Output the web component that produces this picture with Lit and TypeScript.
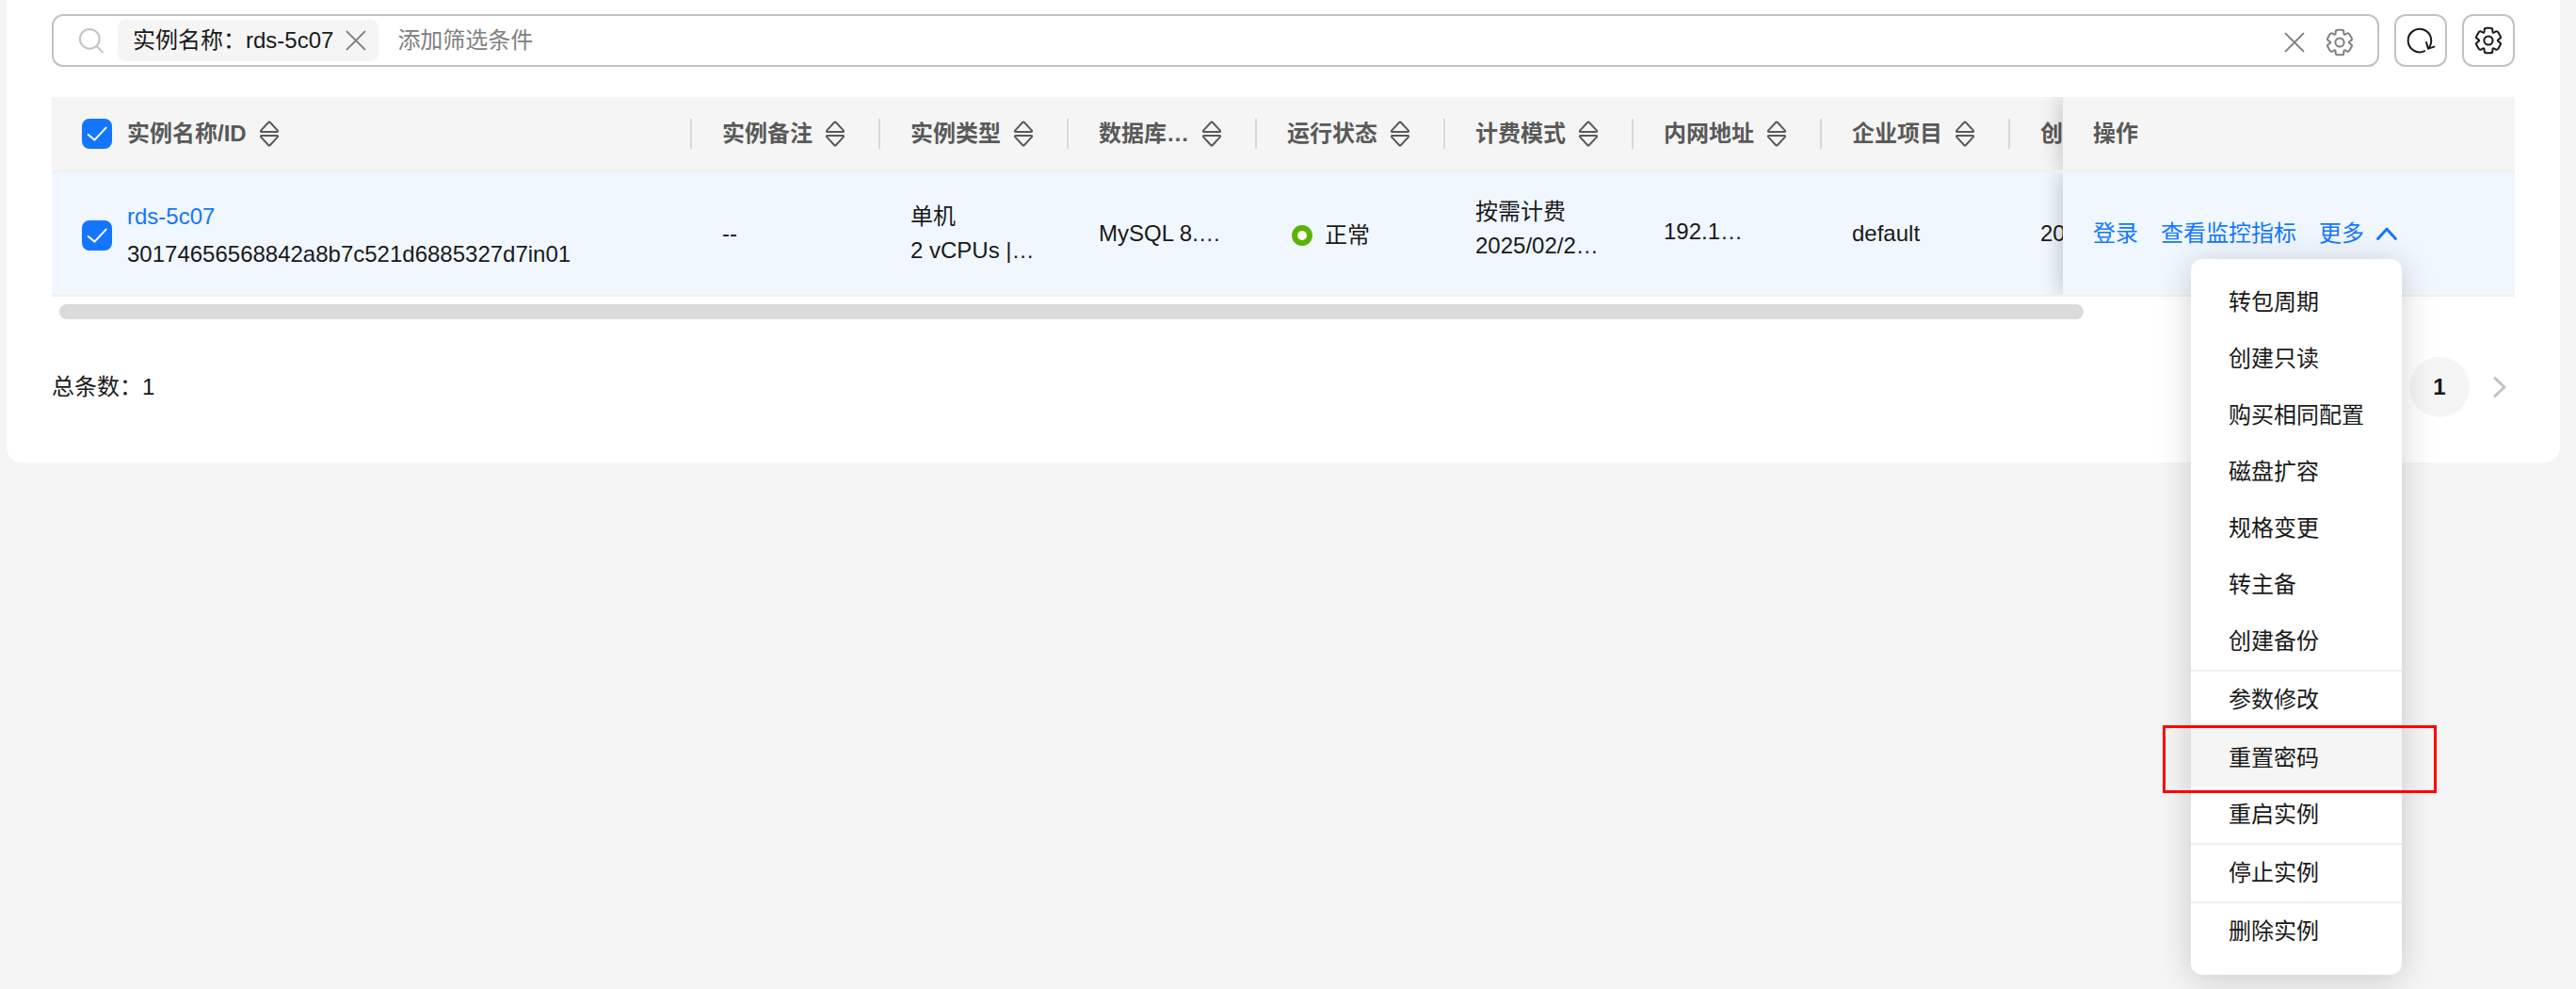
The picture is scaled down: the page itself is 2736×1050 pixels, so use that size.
import { LitElement, html, css, svg, nothing } from "lit";
import { customElement, property, state } from "lit/decorators.js";
import { classMap } from "lit/directives/class-map.js";

/** Outline of a six-lobed gear, drawn as a star polygon with rounded vertices. */
function gearOutline(cx: number, cy: number, outer: number, inner: number): string {
  const at = (deg: number, r: number) => {
    const a = ((deg - 90) * Math.PI) / 180;
    return [cx + r * Math.cos(a), cy + r * Math.sin(a)];
  };
  const pts: number[][] = [];
  for (let k = 0; k < 6; k++) {
    pts.push(at(k * 60 - 18, outer), at(k * 60 + 18, outer), at(k * 60 + 30, inner));
  }
  const n = pts.length;
  const toward = (a: number[], b: number[], d: number) => {
    const len = Math.hypot(b[0] - a[0], b[1] - a[1]);
    const t = Math.min(d / len, 0.5);
    return `${(a[0] + (b[0] - a[0]) * t).toFixed(2)} ${(a[1] + (b[1] - a[1]) * t).toFixed(2)}`;
  };
  let d = "";
  for (let i = 0; i < n; i++) {
    const p = pts[i];
    const prev = pts[(i + n - 1) % n];
    const next = pts[(i + 1) % n];
    d += `${i ? "L" : "M"}${toward(p, prev, 2.2)}Q${p[0].toFixed(2)} ${p[1].toFixed(2)} ${toward(p, next, 2.2)}`;
  }
  return d + "Z";
}

const SHAPES: Record<string, { w: number; h: number; body: unknown }> = {
  search: {
    w: 28,
    h: 28,
    body: svg`<circle cx="12.3" cy="12.3" r="10.4" /><path d="M19.6 20 26 26.4" />`,
  },
  close: { w: 24, h: 24, body: svg`<path d="M2.6 2.6 21.4 21.4M21.4 2.6 2.6 21.4" />` },
  gear: {
    w: 32,
    h: 32,
    body: svg`<path d=${gearOutline(16, 16, 14, 8.8)} /><circle cx="16" cy="16" r="4.6" />`,
  },
  refresh: {
    w: 32,
    h: 32,
    body: svg`<path d="M20.2 27.2A12.3 12.3 0 1 1 24 24.4" /><path d="M22 18 24 24.6 30.4 22.6" />`,
  },
  sort: {
    w: 24,
    h: 28,
    body: svg`<path d="M11.3 1.8q.7-.7 1.4 0l8 8.6q1.2 1.6-.7 1.7H4q-1.9-.1-.7-1.7Z" />
      <path d="M11.3 26.2q.7.7 1.4 0l8-8.6q1.2-1.6-.7-1.7H4q-1.9.1-.7 1.7Z" />`,
  },
  up: { w: 32, h: 24, body: svg`<path d="M6.6 17.4 16 7.2 25.4 17.4" />` },
  right: { w: 24, h: 24, body: svg`<path d="M7 2.6 17 12 7 21.4" />` },
};

@customElement("ui-icon")
export class UiIcon extends LitElement {
  static styles = css`
    :host {
      display: inline-flex;
      flex: none;
    }
    .shape {
      display: block;
      fill: none;
      stroke: currentColor;
      stroke-width: 2;
      stroke-linecap: round;
      stroke-linejoin: round;
    }
    .bold {
      stroke-width: 3;
    }
  `;
  @property() name = "close";
  @property({ type: Boolean }) bold = false;

  render() {
    const s = SHAPES[this.name];
    return html`<svg
      class=${classMap({ shape: true, bold: this.bold })}
      width=${s.w}
      height=${s.h}
      viewBox="0 0 ${s.w} ${s.h}"
      aria-hidden="true"
    >${s.body}</svg>`;
  }
}

@customElement("ui-check")
export class UiCheck extends LitElement {
  static styles = css`
    :host {
      display: inline-flex;
      flex: none;
    }
    .wrap {
      position: relative;
      display: block;
      width: 32px;
      height: 32px;
    }
    .box {
      appearance: none;
      display: block;
      width: 32px;
      height: 32px;
      margin: 0;
      border: 2px solid #c2c2c2;
      border-radius: 8px;
      background: #fff;
      cursor: pointer;
    }
    .box:checked {
      border-color: #1476ff;
      background: #1476ff;
    }
    .tick {
      position: absolute;
      inset: 0;
      fill: none;
      stroke: #fff;
      stroke-width: 2;
      stroke-linecap: round;
      stroke-linejoin: round;
      pointer-events: none;
    }
  `;
  @property() label = "";

  render() {
    return html`<label class="wrap">
      <input class="box" type="checkbox" checked aria-label=${this.label} />
      <svg class="tick" width="32" height="32" viewBox="0 0 32 32" aria-hidden="true">
        <path d="M6.8 17 13.4 22.6 25.6 9.6" />
      </svg>
    </label>`;
  }
}

interface MenuItem {
  text: string;
  divided?: boolean;
  marked?: boolean;
}

const MENU: MenuItem[] = [
  { text: "转包周期" },
  { text: "创建只读" },
  { text: "购买相同配置" },
  { text: "磁盘扩容" },
  { text: "规格变更" },
  { text: "转主备" },
  { text: "创建备份" },
  { text: "参数修改", divided: true },
  { text: "重置密码", divided: true, marked: true },
  { text: "重启实例" },
  { text: "停止实例", divided: true },
  { text: "删除实例", divided: true },
];

const COLUMNS = ["实例备注", "实例类型", "数据库…", "运行状态", "计费模式", "内网地址", "企业项目"];

@customElement("app-root")
export class AppRoot extends LitElement {
  static styles = css`
    :host {
      display: flow-root;
      box-sizing: border-box;
      min-height: 100vh;
      background: #f5f5f5;
      color: #191919;
      font-family: "Liberation Sans", "Noto Sans CJK SC", sans-serif;
      font-size: 24px;
      line-height: 36px;
    }
    button,
    input {
      font: inherit;
      color: inherit;
      margin: 0;
      padding: 0;
      border: 0;
      background: none;
    }
    button {
      cursor: pointer;
    }
    a {
      color: #1476ff;
      text-decoration: none;
    }
    .card {
      margin: 0 17px 0 7px;
      padding: 15px 48px 48px;
      border-radius: 0 0 16px 16px;
      background: #fff;
    }
    .toolbar {
      display: flex;
      gap: 16px;
      margin-bottom: 32px;
    }
    .search {
      box-sizing: border-box;
      flex: 1;
      display: flex;
      align-items: center;
      height: 56px;
      padding: 0 24px 0 26px;
      border: 2px solid #c2c2c2;
      border-radius: 12px;
      color: #808080;
    }
    .lens {
      color: #c2c2c2;
    }
    .chip {
      display: flex;
      align-items: center;
      gap: 12px;
      height: 44px;
      margin: 0 20px 0 14px;
      padding: 0 12px 0 16px;
      border-radius: 8px;
      background: #f5f5f5;
      color: #191919;
      white-space: nowrap;
    }
    .plain {
      display: flex;
      color: #808080;
    }
    .filter {
      flex: 1;
      min-width: 0;
      height: 44px;
      outline: 0;
    }
    .filter::placeholder {
      color: #808080;
      opacity: 1;
    }
    .tools {
      display: flex;
      align-items: center;
      gap: 20px;
      padding-top: 4px;
    }
    .square {
      box-sizing: border-box;
      display: flex;
      align-items: center;
      justify-content: center;
      width: 56px;
      height: 56px;
      border: 2px solid #c2c2c2;
      border-radius: 12px;
    }
    .grid {
      width: 100%;
      table-layout: fixed;
      border-collapse: separate;
      border-spacing: 0;
    }
    .first {
      width: auto;
    }
    .mid {
      width: 200px;
    }
    .cut {
      width: 56px;
    }
    .ops {
      width: 480px;
    }
    th,
    td {
      box-sizing: border-box;
      padding: 0 0 0 32px;
      border-bottom: 2px solid #f0f0f0;
      text-align: left;
      vertical-align: middle;
      white-space: nowrap;
    }
    th {
      height: 80px;
      background: #f5f5f5;
      color: #595959;
      font-weight: 700;
    }
    td {
      height: 132px;
      background: #f0f7ff;
    }
    .head {
      display: flex;
      align-items: center;
      gap: 12px;
      height: 32px;
    }
    .ruled {
      border-right: 2px solid #d9d9d9;
    }
    .lead {
      display: flex;
      align-items: center;
      gap: 16px;
    }
    .sorter {
      display: flex;
    }
    .name {
      line-height: 40px;
      padding-top: 4px;
    }
    .clip {
      overflow: hidden;
      text-overflow: clip;
    }
    .line {
      display: block;
    }
    .raised {
      padding-bottom: 10px;
    }
    .lifted {
      padding-bottom: 4px;
    }
    .status {
      display: flex;
      align-items: center;
      gap: 8px;
      padding-top: 4px;
    }
    .ring {
      box-sizing: border-box;
      width: 22px;
      height: 22px;
      margin: 5px;
      border: 6px solid #5cb300;
      border-radius: 50%;
      background: #fff;
    }
    .pinned {
      position: relative;
    }
    .pinned::before {
      content: "";
      position: absolute;
      inset: 0;
      box-shadow: 0 0 24px rgba(0, 0, 0, 0.24);
      clip-path: inset(0 100% 0 -24px);
      pointer-events: none;
    }
    .actions {
      display: flex;
      gap: 24px;
      line-height: 38px;
    }
    .more {
      position: relative;
    }
    .opener {
      display: flex;
      align-items: center;
      gap: 8px;
      color: #1476ff;
    }
    .menu {
      position: absolute;
      z-index: 2;
      top: calc(100% + 8px);
      right: 0;
      box-sizing: border-box;
      width: 224px;
      padding: 16px 0;
      border-radius: 12px;
      background: #fff;
      box-shadow: 0 4px 36px rgba(0, 0, 0, 0.18);
    }
    .item {
      display: block;
      width: 100%;
      height: 60px;
      padding-left: 40px;
      text-align: left;
    }
    .row {
      position: relative;
    }
    .divided {
      border-top: 2px solid #f0f0f0;
    }
    .active {
      background: #f5f5f5;
    }
    .frame {
      position: absolute;
      z-index: 1;
      inset: -5px -37px -7px -30px;
      border: 3px solid #f00;
      pointer-events: none;
    }
    .track {
      display: grid;
      grid-template-columns: 43fr 9fr;
      padding: 8px;
    }
    .thumb {
      height: 16px;
      border-radius: 8px;
      background: #dbdbdb;
    }
    .footer {
      display: flex;
      align-items: center;
      justify-content: space-between;
      margin-top: 32px;
    }
    .pager {
      display: flex;
      align-items: center;
      gap: 20px;
      padding-right: 4px;
    }
    .page {
      width: 64px;
      height: 64px;
      border-radius: 50%;
      background: #f5f5f5;
      font-weight: 700;
    }
    .next {
      display: flex;
      color: #c2c2c2;
    }
  `;

  @state() private open = true;

  private headCell(text: string) {
    return html`<th scope="col">
      <div class="head ruled">
        <span>${text}</span>
        <button class="sorter" aria-label="排序"><ui-icon name="sort"></ui-icon></button>
      </div>
    </th>`;
  }

  private menuItem(item: MenuItem) {
    return html`<div class=${classMap({ row: true, divided: !!item.divided })} role="none">
      <button class=${classMap({ item: true, active: !!item.marked })} role="menuitem">${item.text}</button>
      ${item.marked ? html`<div class="frame"></div>` : nothing}
    </div>`;
  }

  render() {
    return html`<main class="card" lang="zh-CN">
      <div class="toolbar">
        <div class="search">
          <ui-icon class="lens" name="search"></ui-icon>
          <div class="chip">
            <span>实例名称：rds-5c07</span>
            <button class="plain" aria-label="移除"><ui-icon name="close"></ui-icon></button>
          </div>
          <input class="filter" type="text" placeholder="添加筛选条件" aria-label="添加筛选条件" />
          <div class="tools">
            <button class="plain" aria-label="清空"><ui-icon name="close"></ui-icon></button>
            <button class="plain" aria-label="筛选设置"><ui-icon name="gear"></ui-icon></button>
          </div>
        </div>
        <button class="square" aria-label="刷新"><ui-icon name="refresh"></ui-icon></button>
        <button class="square" aria-label="设置"><ui-icon name="gear"></ui-icon></button>
      </div>

      <table class="grid">
        <colgroup>
          <col class="first" />
          ${COLUMNS.map(() => html`<col class="mid" />`)}
          <col class="cut" />
          <col class="ops" />
        </colgroup>
        <thead>
          <tr>
            <th scope="col">
              <div class="head ruled">
                <span class="lead"><ui-check label="全选"></ui-check>实例名称/ID</span>
                <button class="sorter" aria-label="排序"><ui-icon name="sort"></ui-icon></button>
              </div>
            </th>
            ${COLUMNS.map((c) => this.headCell(c))}
            <th scope="col" class="clip">创</th>
            <th scope="col" class="pinned">操作</th>
          </tr>
        </thead>
        <tbody>
          <tr>
            <td>
              <div class="lead name">
                <ui-check label="选择 rds-5c07"></ui-check>
                <div>
                  <a class="line" href="#">rds-5c07</a>
                  <span class="line">30174656568842a8b7c521d6885327d7in01</span>
                </div>
              </div>
            </td>
            <td>--</td>
            <td><span class="line">单机</span><span class="line">2 vCPUs |…</span></td>
            <td>MySQL 8.…</td>
            <td><div class="status"><i class="ring"></i>正常</div></td>
            <td class="raised"><span class="line">按需计费</span><span class="line">2025/02/2…</span></td>
            <td class="lifted">192.1…</td>
            <td>default</td>
            <td class="clip">20</td>
            <td class="pinned">
              <div class="actions">
                <a href="#">登录</a>
                <a href="#">查看监控指标</a>
                <div class="more">
                  <button
                    class="opener"
                    aria-haspopup="menu"
                    aria-expanded=${this.open ? "true" : "false"}
                    @click=${() => (this.open = !this.open)}
                  >更多<ui-icon name="up" bold></ui-icon></button>
                  ${this.open
                    ? html`<div class="menu" role="menu">${MENU.map((m) => this.menuItem(m))}</div>`
                    : nothing}
                </div>
              </div>
            </td>
          </tr>
        </tbody>
      </table>
      <div class="track"><div class="thumb"></div></div>

      <div class="footer">
        <span>总条数：1</span>
        <nav class="pager">
          <button class="page" aria-current="page">1</button>
          <button class="next" aria-label="下一页"><ui-icon name="right" bold></ui-icon></button>
        </nav>
      </div>
    </main>`;
  }
}
